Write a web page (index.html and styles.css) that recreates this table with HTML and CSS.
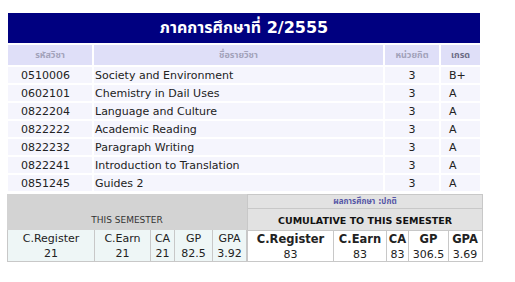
FILE: index.html
```html
<!DOCTYPE html>
<html lang="th">
<head>
<meta charset="utf-8">
<title>ภาคการศึกษาที่ 2/2555</title>
<link rel="stylesheet" href="styles.css">
</head>
<body>
<div class="page">
  <table class="grades">
    <colgroup>
      <col class="c-code"><col class="c-name"><col class="c-credit"><col class="c-grade">
    </colgroup>
    <thead>
      <tr><th colspan="4" class="title">ภาคการศึกษาที่ 2/2555</th></tr>
      <tr class="head">
        <th>รหัสวิชา</th><th>ชื่อรายวิชา</th><th>หน่วยกิต</th><th class="grade-h">เกรด</th>
      </tr>
    </thead>
    <tbody>
      <tr><td class="code">0510006</td><td class="name">Society and Environment</td><td class="credit">3</td><td class="grade">B+</td></tr>
      <tr><td class="code">0602101</td><td class="name">Chemistry in Dail Uses</td><td class="credit">3</td><td class="grade">A</td></tr>
      <tr><td class="code">0822204</td><td class="name">Language and Culture</td><td class="credit">3</td><td class="grade">A</td></tr>
      <tr><td class="code">0822222</td><td class="name">Academic Reading</td><td class="credit">3</td><td class="grade">A</td></tr>
      <tr><td class="code">0822232</td><td class="name">Paragraph Writing</td><td class="credit">3</td><td class="grade">A</td></tr>
      <tr><td class="code">0822241</td><td class="name">Introduction to Translation</td><td class="credit">3</td><td class="grade">A</td></tr>
      <tr><td class="code">0851245</td><td class="name">Guides 2</td><td class="credit">3</td><td class="grade">A</td></tr>
    </tbody>
  </table>

  <div class="summary">
    <div class="sem">
      <div class="sem-head">THIS SEMESTER</div>
      <div class="stats stats-sem">
        <div class="cell">C.Register<br>21</div>
        <div class="cell">C.Earn<br>21</div>
        <div class="cell">CA<br>21</div>
        <div class="cell">GP<br>82.5</div>
        <div class="cell">GPA<br>3.92</div>
      </div>
    </div>
    <div class="cum">
      <div class="cum-status">ผลการศึกษา :ปกติ</div>
      <div class="cum-head">CUMULATIVE TO THIS SEMESTER</div>
      <div class="stats stats-cum">
        <div class="cell"><b>C.Register</b><br>83</div>
        <div class="cell"><b>C.Earn</b><br>83</div>
        <div class="cell"><b>CA</b><br>83</div>
        <div class="cell"><b>GP</b><br>306.5</div>
        <div class="cell"><b>GPA</b><br>3.69</div>
      </div>
    </div>
  </div>
</div>
</body>
</html>
```

FILE: styles.css
```css
html, body {
  margin: 0;
  padding: 0;
  background: #ffffff;
}

body {
  font-family: "DejaVu Sans", "Noto Sans Thai", "Loma", "Tahoma", sans-serif;
  color: #222222;
}

.page {
  padding: 11px 0 0 6px;
  width: 477px;
}

.grades {
  border-collapse: separate;
  border-spacing: 2px;
  width: 476px;
  table-layout: fixed;
}

.c-code { width: 84px; }
.c-name { width: 289px; }
.c-credit { width: 54px; }
.c-grade { width: 39px; }

.grades th,
.grades td {
  padding: 0;
}

.title {
  height: 30px;
  background: #000080;
  color: #ffffff;
  font-size: 16px;
  font-weight: bold;
  text-align: center;
  vertical-align: middle;
}

.head th {
  height: 20px;
  background: #dfdff8;
  color: #a2a2ba;
  font-size: 9px;
  font-weight: bold;
  text-align: center;
  vertical-align: middle;
}

.head .grade-h {
  color: #6c6c86;
}

.grades tbody td {
  height: 14px;
  padding-top: 2px;
  background: #f5f5fd;
  font-size: 11px;
  line-height: 14px;
  vertical-align: middle;
  white-space: nowrap;
}

.grades tbody .code {
  padding-left: 13px;
}

.grades tbody .name {
  padding-left: 1px;
}

.credit {
  text-align: center;
}

.grades tbody .grade {
  padding-left: 8px;
}

.summary {
  display: flex;
  margin: 1px 0 0 1px;
  width: 476px;
}

.sem {
  width: 240px;
  display: flex;
  flex-direction: column;
}

.sem-head {
  height: 36px;
  box-sizing: border-box;
  background: #d3d3d3;
  color: #333333;
  font-size: 9px;
  display: flex;
  align-items: flex-end;
  justify-content: center;
  padding-bottom: 5px;
}

.cum {
  width: 236px;
  display: flex;
  flex-direction: column;
}

.cum-status {
  height: 14px;
  box-sizing: border-box;
  background: #e2e2e2;
  border: 1px solid #c8c8c8;
  border-bottom: none;
  color: #5656a6;
  font-size: 8px;
  font-weight: bold;
  text-align: center;
  line-height: 13px;
}

.cum-head {
  height: 22px;
  box-sizing: border-box;
  background: #e2e2e2;
  border: 1px solid #c8c8c8;
  border-bottom: none;
  color: #111111;
  font-size: 9.5px;
  font-weight: bold;
  display: flex;
  align-items: center;
  justify-content: center;
  padding-top: 1px;
}

.stats {
  display: grid;
  height: 32px;
  box-sizing: border-box;
  border: 1px solid #c8c8c8;
  font-size: 11px;
  line-height: 15px;
}

.stats-sem {
  grid-template-columns: 86px 56px 24px 38px 34px;
  border-top: none;
  background: #eef6f6;
}

.stats-cum {
  grid-template-columns: 86px 53px 22px 40px 33px;
  background: #ffffff;
  border-left: none;
}

.stats-cum b {
  font-size: 11.5px;
}

.cell {
  box-sizing: border-box;
  text-align: center;
  white-space: nowrap;
  padding-top: 1px;
}

.cell + .cell {
  border-left: 1px solid #c8c8c8;
}

.stats-cum .cell:first-child {
  border-left: 1px solid #c8c8c8;
}
```
